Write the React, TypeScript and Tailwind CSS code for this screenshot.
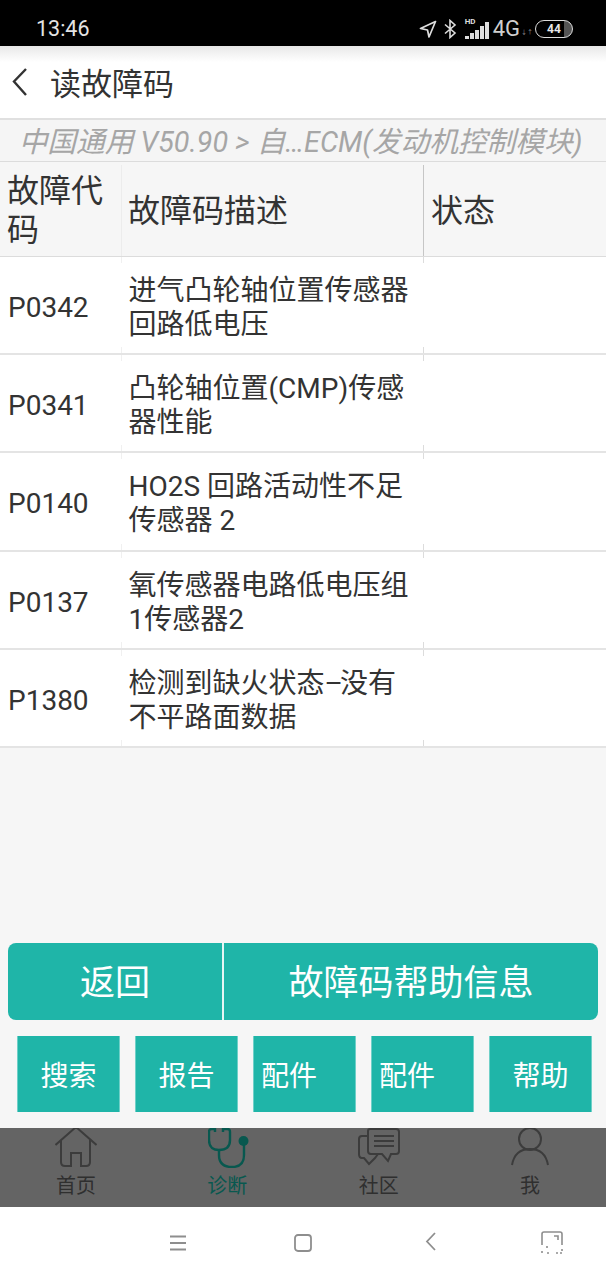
import React from 'react';

const font = '[font-family:Roboto,"Noto_Sans_CJK_SC",sans-serif]';

const rows: { code: string; desc: React.ReactNode[]; h: string }[] = [
  { code: 'P0342', desc: ['进气凸轮轴位置传感器', '回路低电压'], h: 'h-[98px]' },
  { code: 'P0341', desc: ['凸轮轴位置(CMP)传感', '器性能'], h: 'h-[98px]' },
  { code: 'P0140', desc: ['HO2S 回路活动性不足', '传感器 2'], h: 'h-[99px]' },
  { code: 'P0137', desc: ['氧传感器电路低电压组', '1传感器2'], h: 'h-[98px]' },
  {
    code: 'P1380',
    desc: [
      <>
        检测到缺火状态<span className="tracking-[-3px]">–</span>没有
      </>,
      '不平路面数据',
    ],
    h: 'h-[98px]',
  },
];

const StatusBar = () => (
  <div className="h-[46px] shrink-0 bg-black flex items-center pl-[36px] pr-[33px] text-[#e4e4e4]">
    <span className="text-[21.5px] leading-none mt-[11px]">13:46</span>
    <div className="ml-auto flex items-center mt-[11px]">
      <svg width="18" height="18" viewBox="0 0 18 18" fill="none" stroke="#ddd" strokeWidth="1.7">
        <path d="M16.5 1.5 L1.5 8.5 L8.5 10 L10 17 Z" strokeLinejoin="round" />
      </svg>
      <svg width="14" height="20" viewBox="0 0 14 20" fill="none" stroke="#ddd" strokeWidth="1.6" className="ml-[6px]">
        <path d="M2 5.5 L12 14 L7 18.5 V1.5 L12 6 L2 14.5" />
      </svg>
      <div className="relative ml-[8px] w-[24px] h-[20px]">
        <span className="absolute left-0 -top-[1px] text-[8px] leading-none font-bold text-[#ddd]">HD</span>
        <div className="absolute inset-0 flex items-end gap-[1px]">
          <div className="w-[4px] h-[3px] bg-[#ddd]" />
          <div className="w-[4px] h-[6px] bg-[#ddd]" />
          <div className="w-[4px] h-[9px] bg-[#ddd]" />
          <div className="w-[4px] h-[13px] bg-[#ddd]" />
          <div className="w-[4px] h-[17px] bg-[#ddd]" />
        </div>
      </div>
      <span className="ml-[4px] text-[22px] leading-none text-[#cfcfcf]">4G</span>
      <span className="ml-[1px] mt-[6px] text-[6px] leading-none text-[#999]">↓↑</span>
      <div className="ml-[2px] w-[38px] h-[18px] rounded-full border-[1.5px] border-[#ddd] bg-[linear-gradient(90deg,#000_0_78%,#555_78%)] flex items-center justify-center text-[12px] font-bold leading-none text-[#e8e8e8]">
        44
      </div>
    </div>
  </div>
);

const Header = () => (
  <div className="h-[74px] shrink-0 bg-[linear-gradient(#e8e8e8,#fff_16px)] border-b-2 border-[#e0e0e0] flex items-center">
    <svg width="20" height="30" viewBox="0 0 20 30" fill="none" stroke="#333" strokeWidth="2.4" className="ml-[10px]">
      <path d="M16 2 L4 14.5 L16 28" />
    </svg>
    <span className="ml-[20px] text-[31px] leading-none text-[#333] mt-[5px]">读故障码</span>
  </div>
);

const SmallButton = ({ label, left }: { label: string; left?: boolean }) => (
  <div
    className={`w-[103px] h-[76px] bg-[#1fb5a8] border-x border-[#6fd0c8] flex items-center pt-[5px] text-[28px] leading-none text-white ${
      left ? 'pl-[7px]' : 'justify-center'
    }`}
  >
    {label}
  </div>
);

const NavItem = ({ label, active, children }: { label: string; active?: boolean; children: React.ReactNode }) => (
  <div className={`w-[110px] flex flex-col items-center ${active ? 'text-[#08584f]' : 'text-[#2f2f2f]'}`}>
    <div className="h-[40px] flex items-start justify-center">{children}</div>
    <span className="text-[20px] leading-none mt-[8px]">{label}</span>
  </div>
);

const BottomNav = () => (
  <div className="h-[79px] shrink-0 bg-[#646464] overflow-hidden flex justify-between pl-[21px] pr-[21px]">
    <NavItem label="首页">
      <svg width="42" height="40" viewBox="0 0 42 40" fill="none" stroke="#3c3c3c" strokeWidth="2">
        <path d="M0.5 17 L21 -1 L41.5 17" />
        <path d="M6 12 V34 Q6 38 10 38 H16 V25 H26 V38 H31 Q35 38 35 34 V12" />
      </svg>
    </NavItem>
    <NavItem label="诊断" active>
      <svg width="42" height="40" viewBox="0 0 42 40" fill="none" stroke="#08584f" strokeWidth="2.4" className="ml-[3px]">
        <path d="M7 1 H4 Q1 1 1 4 V12 Q1 22 11 22 Q22 22 22 12 V4 Q22 1 19 1 H15" />
        <path d="M7 -1 V4 M15 -1 V4" />
        <path d="M11 22 V27 Q11 39 24 39 Q36 39 36 27 V14" />
        <circle cx="35.5" cy="13" r="5" fill="#08584f" stroke="none" />
      </svg>
    </NavItem>
    <NavItem label="社区">
      <svg width="42" height="40" viewBox="0 0 42 40" fill="none" stroke="#3c3c3c" strokeWidth="2">
        <path d="M10 3 Q10 1 12 1 H38 Q41 1 41 4 V23 Q41 26 38 26 H33 L30 33 L24 26 H13 Q10 26 10 23 Z" />
        <path d="M10 8 H4 Q1 8 1 11 V26 Q1 30 4 30 H6 L11 36 L17 30 L20 26" />
        <path d="M16 8 H36 M16 13 H36 M16 18 H36" />
      </svg>
    </NavItem>
    <NavItem label="我">
      <svg width="38" height="40" viewBox="0 0 38 40" fill="none" stroke="#3c3c3c" strokeWidth="2">
        <circle cx="19" cy="11" r="11" />
        <path d="M1 37 C3 26 10 21 19 21 C28 21 35 26 37 37" />
      </svg>
    </NavItem>
  </div>
);

const SystemBar = () => (
  <div className="h-[73px] shrink-0 bg-white flex items-center">
    <svg width="18" height="16" viewBox="0 0 18 16" stroke="#8e8e8e" strokeWidth="1.8" className="ml-[169px] -mt-[2px]">
      <path d="M1 1.5 H17 M1 8 H17 M1 14.5 H17" />
    </svg>
    <svg width="18" height="18" viewBox="0 0 18 18" fill="none" stroke="#8e8e8e" strokeWidth="1.8" className="ml-[107px] -mt-[2px]">
      <rect x="1" y="1" width="16" height="16" rx="3" />
    </svg>
    <svg width="12" height="20" viewBox="0 0 12 20" fill="none" stroke="#8e8e8e" strokeWidth="1.8" className="ml-[113px] -mt-[3px]">
      <path d="M10 1 L2 9.5 L10 18" />
    </svg>
    <svg width="22" height="24" viewBox="0 0 22 24" fill="none" stroke="#8e8e8e" strokeWidth="1.6" className="ml-[104px] -mt-[2px]">
      <path d="M1 14 V3 Q1 1 3 1 H19 Q21 1 21 3 V14" />
      <path d="M13 5 H17 V9" />
      <path d="M6 15 V17 M1 20 V22 H3 M6 22 H9 M15 22 H21 V18" strokeDasharray="2 2" />
    </svg>
  </div>
);

export default function App() {
  return (
    <div className={`w-[606px] h-[1280px] flex flex-col bg-[#f6f6f6] overflow-hidden ${font}`}>
      <StatusBar />
      <Header />

      <div className="h-[41px] shrink-0 pt-[4px] pr-[5px] bg-[#f5f5f5] flex items-center justify-center text-[28.7px] italic leading-none whitespace-nowrap text-[#a6a6a6]">
        中国通用 V50.90 &gt; 自…ECM(发动机控制模块)
      </div>

      <div className="flex h-[96px] shrink-0 pt-[3px] bg-[#f6f6f6] border-y border-[#dcdcdc] text-[32px] text-[#333]">
        <div className="w-[122px] pl-[7px] flex items-center leading-[39px] border-r border-[#ececec]">故障代码</div>
        <div className="w-[302px] pl-[6px] flex items-center border-r border-[#c6c6c6]">故障码描述</div>
        <div className="flex-1 pl-[7px] flex items-center">状态</div>
      </div>

      {rows.map((row) => (
        <div key={row.code} className={`relative flex ${row.h} shrink-0 bg-white border-b-2 border-[#e4e4e4] text-[#333] pt-[5px]`}>
          <div className="w-[122px] pl-[8px] flex items-center text-[28px]">{row.code}</div>
          <div className="w-[302px] pl-[6.5px] flex flex-col justify-center text-[28px] leading-[34px] whitespace-nowrap">
            <span>{row.desc[0]}</span>
            <span>{row.desc[1]}</span>
          </div>
          <div className="absolute left-[121px] top-0 w-px h-[6px] bg-[#f0f0f0]" />
          <div className="absolute left-[121px] bottom-0 w-px h-[6px] bg-[#f0f0f0]" />
          <div className="absolute left-[423px] top-0 w-px h-[6px] bg-[#dcdcdc]" />
          <div className="absolute left-[423px] bottom-0 w-px h-[6px] bg-[#dcdcdc]" />
        </div>
      ))}

      <div className="flex-1 flex flex-col justify-end px-[8px] pb-[16px]">
        <div className="h-[77px] rounded-[8px] bg-[#1fb5a8] flex text-[35px] leading-none text-white">
          <div className="w-[216px] pt-[4px] flex items-center justify-center border-r-2 border-[#e6f6f4]">返回</div>
          <div className="flex-1 pt-[4px] flex items-center justify-center">故障码帮助信息</div>
        </div>
        <div className="mt-[16px] pl-[9px] flex gap-[15px]">
          <SmallButton label="搜索" />
          <SmallButton label="报告" />
          <SmallButton label="配件" left />
          <SmallButton label="配件" left />
          <SmallButton label="帮助" />
        </div>
      </div>

      <BottomNav />
      <SystemBar />
    </div>
  );
}
